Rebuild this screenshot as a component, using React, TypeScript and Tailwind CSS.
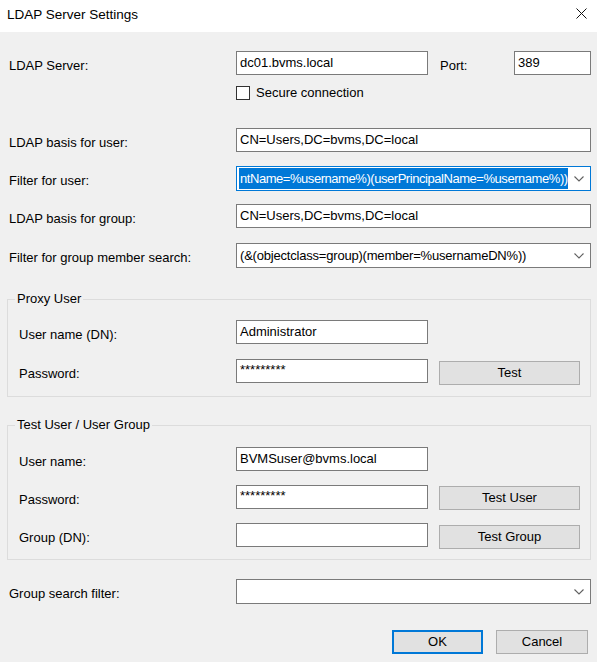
import React from "react";

function Chevron() {
  return (
    <svg width="10" height="6" viewBox="0 0 10 6" fill="none" stroke="#606060" strokeWidth="1.1">
      <polyline points="0.5,0.5 5,5 9.5,0.5" />
    </svg>
  );
}

function TextBox({ value, className = "" }: { value?: string; className?: string }) {
  return (
    <div className={`h-[24px] shrink-0 border border-[#7a7a7a] bg-white px-[3px] flex items-center overflow-hidden whitespace-nowrap ${className}`}>
      {value}
    </div>
  );
}

function ComboBox({ children, className = "" }: { children?: React.ReactNode; className?: string }) {
  return (
    <div className={`h-[25px] w-[355px] shrink-0 border bg-white flex items-center overflow-hidden whitespace-nowrap ${className}`}>
      <div className="flex-1 overflow-hidden pl-[3px] h-full flex items-center">{children}</div>
      <div className="w-[22px] h-full flex items-center justify-center shrink-0">
        <Chevron />
      </div>
    </div>
  );
}

function Button({ label, className = "" }: { label: string; className?: string }) {
  return (
    <div className={`h-[24px] shrink-0 bg-[#e1e1e1] flex items-center justify-center ${className}`}>
      {label}
    </div>
  );
}

function Label({ text, w = "w-[227px]" }: { text: string; w?: string }) {
  return <div className={`${w} shrink-0 pt-[7px]`}>{text}</div>;
}

export default function App() {
  return (
    <div className="w-[597px] h-[662px] bg-[#f0f0f0] text-[13px] text-black font-['Liberation_Sans',Arial,sans-serif] leading-[16px] overflow-hidden">
      {/* title bar */}
      <div className="h-[32px] bg-white flex items-center justify-between pl-[7px] pr-[10px]">
        <span className="text-[13.5px] pb-[2px]">LDAP Server Settings</span>
        <svg width="11" height="11" viewBox="0 0 11 11" stroke="#111" strokeWidth="1" className="mb-[5px]">
          <line x1="0.5" y1="0.5" x2="10.5" y2="10.5" />
          <line x1="10.5" y1="0.5" x2="0.5" y2="10.5" />
        </svg>
      </div>

      <div className="pl-[9px] pr-[6px]">
        <div className="mt-[19px] flex items-start">
          <Label text="LDAP Server:" />
          <TextBox value="dc01.bvms.local" className="w-[192px]" />
          <div className="ml-[12px] w-[74px] pt-[7px]">Port:</div>
          <TextBox value="389" className="w-[77px]" />
        </div>

        <div className="mt-[10px] flex items-center pl-[227px]">
          <div className="w-[14px] h-[14px] border border-[#333] bg-white" />
          <span className="ml-[6px]">Secure connection</span>
        </div>

        <div className="mt-[27px] flex items-start">
          <Label text="LDAP basis for user:" />
          <TextBox value="CN=Users,DC=bvms,DC=local" className="w-[355px]" />
        </div>

        <div className="mt-[14px] flex items-start">
          <Label text="Filter for user:" />
          <ComboBox className="border-[#0078d7]">
            <span className="bg-[#0078d7] text-white h-[21px] flex items-center -ml-[1px] pl-[1px] pr-[1px] tracking-[-0.45px]">
              ntName=%username%)(userPrincipalName=%username%))
            </span>
          </ComboBox>
        </div>

        <div className="mt-[13px] flex items-start">
          <Label text="LDAP basis for group:" />
          <TextBox value="CN=Users,DC=bvms,DC=local" className="w-[355px]" />
        </div>

        <div className="mt-[15px] flex items-start">
          <Label text="Filter for group member search:" />
          <ComboBox className="border-[#7a7a7a]">
            <span className="tracking-[-0.2px]">(&amp;(objectclass=group)(member=%usernameDN%))</span>
          </ComboBox>
        </div>
      </div>

      <fieldset className="mt-[23px] ml-[7px] mr-[6px] border border-[#dcdcdc] pl-[11px] pr-[10px] pb-[11px]">
        <legend className="-ml-[4px] px-[2px] leading-[16px]">Proxy User</legend>
        <div className="mt-[13px] flex items-start">
          <Label text="User name (DN):" w="w-[217px]" />
          <TextBox value="Administrator" className="w-[192px]" />
        </div>
        <div className="mt-[15px] flex items-start">
          <Label text="Password:" w="w-[217px]" />
          <TextBox value="*********" className="w-[192px] !items-start pt-[2px]" />
          <Button label="Test" className="ml-[11px] w-[141px] border border-[#adadad] mt-[2px]" />
        </div>
      </fieldset>

      <fieldset className="mt-[20px] ml-[7px] mr-[6px] border border-[#dcdcdc] pl-[11px] pr-[10px] pb-[10px]">
        <legend className="-ml-[4px] px-[2px] leading-[16px]">Test User / User Group</legend>
        <div className="mt-[14px] flex items-start">
          <Label text="User name:" w="w-[217px]" />
          <TextBox value="BVMSuser@bvms.local" className="w-[192px]" />
        </div>
        <div className="mt-[14px] flex items-start">
          <Label text="Password:" w="w-[217px]" />
          <TextBox value="*********" className="w-[192px] !items-start pt-[2px]" />
          <Button label="Test User" className="ml-[11px] w-[141px] border border-[#adadad] mt-[1px]" />
        </div>
        <div className="mt-[13px] flex items-start">
          <Label text="Group (DN):" w="w-[217px]" />
          <TextBox value="" className="w-[192px]" />
          <Button label="Test Group" className="ml-[11px] w-[141px] border border-[#adadad] mt-[2px]" />
        </div>
      </fieldset>

      <div className="pl-[9px] pr-[6px]">
        <div className="mt-[19px] flex items-start">
          <Label text="Group search filter:" />
          <ComboBox className="border-[#7a7a7a]" />
        </div>

        <div className="mt-[26px] flex justify-end pr-[3px] gap-[13px]">
          <Button label="OK" className="w-[91px] border-2 border-[#0078d7]" />
          <Button label="Cancel" className="w-[92px] border border-[#adadad]" />
        </div>
      </div>
    </div>
  );
}
